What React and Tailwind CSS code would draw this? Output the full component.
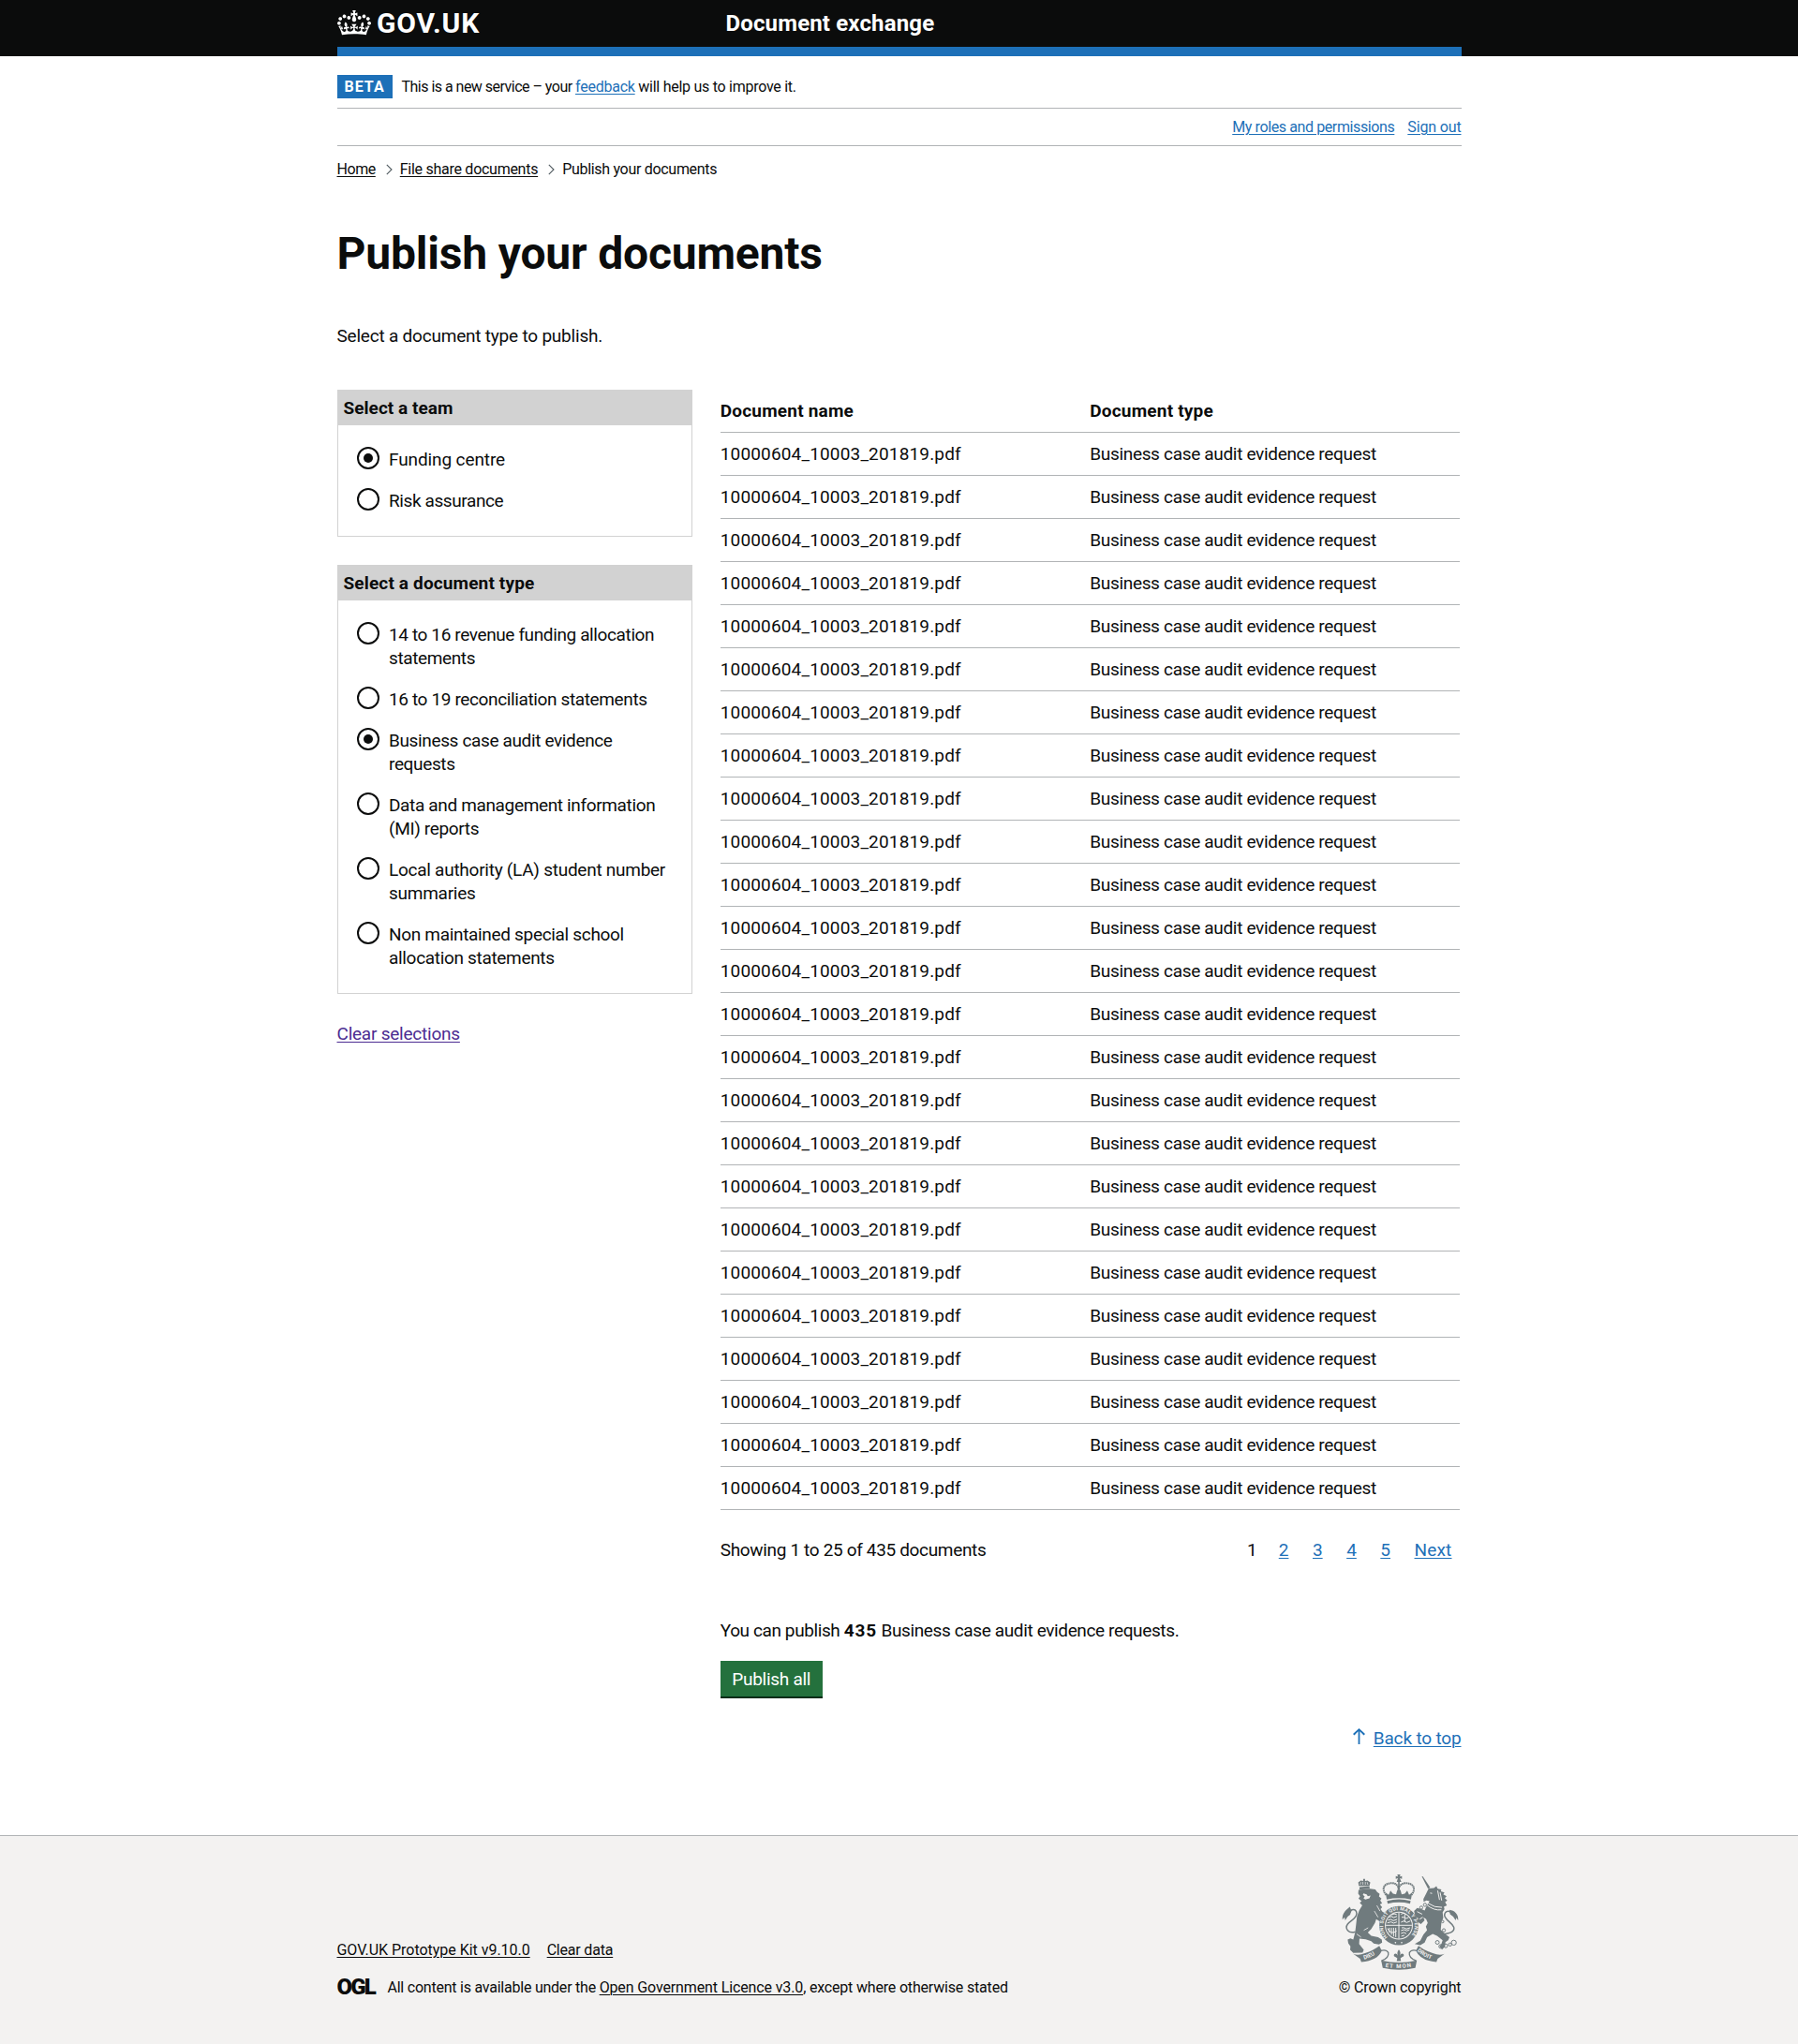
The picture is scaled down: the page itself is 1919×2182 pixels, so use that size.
const LINK = "text-[#1d70b8] underline underline-offset-2 decoration-1";
const DARK_LINK = "text-[#0b0c0c] underline underline-offset-2 decoration-1";

const teams = [
  { label: ["Funding centre"], tracking: "tracking-[-0.11px]", checked: true },
  { label: ["Risk assurance"], tracking: "tracking-[-0.4px]" },
];

const documentTypes = [
  { label: ["14 to 16 revenue funding allocation", "statements"], tracking: "tracking-[-0.38px]" },
  { label: ["16 to 19 reconciliation statements"], tracking: "tracking-[-0.37px]" },
  { label: ["Business case audit evidence", "requests"], tracking: "tracking-[-0.36px]", checked: true },
  { label: ["Data and management information", "(MI) reports"], tracking: "tracking-[-0.35px]" },
  { label: ["Local authority (LA) student number", "summaries"], tracking: "tracking-[-0.26px]" },
  { label: ["Non maintained special school", "allocation statements"], tracking: "tracking-[-0.32px]" },
];

const documents = Array.from({ length: 25 }, () => ({
  name: "10000604_10003_201819.pdf",
  type: "Business case audit evidence request",
}));

function Crown() {
  return (
    <svg viewBox="0 0 132 97" className="h-[26.5px] w-9" fill="currentColor" aria-hidden="true">
      <path d="M25 30.2c3.5 1.5 7.7-.2 9.1-3.7 1.5-3.6-.2-7.8-3.9-9.2-3.6-1.4-7.6.3-9.1 3.9-1.4 3.5.3 7.5 3.9 9zM9 39.5c3.6 1.5 7.8-.2 9.2-3.7 1.5-3.6-.2-7.8-3.9-9.1-3.6-1.5-7.6.2-9.1 3.8-1.4 3.5.3 7.5 3.8 9zM4.4 57.2c3.5 1.5 7.7-.2 9.1-3.8 1.5-3.6-.2-7.7-3.9-9.1-3.5-1.5-7.6.3-9.1 3.8-1.4 3.5.3 7.6 3.9 9.1zm38.3-21.4c3.5 1.5 7.7-.2 9.1-3.8 1.5-3.6-.2-7.7-3.9-9.1-3.6-1.5-7.6.3-9.1 3.8-1.3 3.6.4 7.7 3.9 9.1zm64.4-5.6c-3.6 1.5-7.8-.2-9.1-3.7-1.5-3.6.2-7.8 3.8-9.2 3.6-1.4 7.7.3 9.2 3.9 1.3 3.5-.4 7.5-3.9 9zm15.9 9.3c-3.6 1.5-7.7-.2-9.1-3.7-1.5-3.6.2-7.8 3.7-9.1 3.6-1.5 7.7.2 9.2 3.8 1.5 3.5-.3 7.5-3.8 9zm4.7 17.7c-3.6 1.5-7.8-.2-9.2-3.8-1.5-3.6.2-7.7 3.9-9.1 3.6-1.5 7.7.3 9.2 3.8 1.3 3.5-.4 7.6-3.9 9.1zM89.3 35.8c-3.6 1.5-7.8-.2-9.2-3.8-1.4-3.6.2-7.7 3.9-9.1 3.6-1.5 7.7.3 9.2 3.8 1.4 3.6-.3 7.7-3.9 9.1zM69.7 17.7l8.9 4.7V9.3l-8.9 2.8c-.2-.3-.5-.6-.9-.9L72.4 0H59.6l3.5 11.2c-.3.3-.6.5-.9.9l-8.8-2.8v13.1l8.8-4.7c.3.3.6.7.9.9l-5 15.4v.1c-.2.8-.4 1.6-.4 2.4 0 4.1 3.1 7.5 7 8.1h.2c.3 0 .7.1 1 .1.4 0 .7 0 1-.1h.2c4-.6 7.1-4.1 7.1-8.1 0-.8-.1-1.7-.4-2.4V34l-5.1-15.4c.4-.2.7-.6 1-.9zM66 92.8c16.9 0 32.8 1.1 47.1 3.2 4-16.9 8.9-26.7 14-33.5l-9.6-3.4c1 4.9 1.1 7.2 0 10.2-1.5-1.4-3-4.3-4.2-8.7L108.6 76c2.8-2 5-3.2 7.5-3.3-4.4 9.4-10 11.9-13.6 11.2-4.3-.8-6.3-4.6-5.6-7.9 1-4.7 5.7-5.9 8-.5 4.3-8.7-3-11.4-7.6-8.8 7.1-7.2 7.9-13.5 2.1-21.1-8 6.1-8.1 12.3-4.5 20.8-4.7-5.4-12.1-2.5-9.5 6.2 3.4-5.2 7.9-2 7.2 3.1-.6 4.3-6.4 7.8-13.5 7.2-10.3-.9-10.9-8-11.2-13.8 2.5-.5 7.1 1.8 11 7.3L80.2 60c-4.1 4.4-8 5.3-12.3 5.4 1.4-4.4 8-11.6 8-11.6H55.5s6.4 7.2 7.9 11.6c-4.2-.1-8-1-12.3-5.4l1.4 16.4c3.9-5.5 8.5-7.7 10.9-7.3-.3 5.8-.9 12.8-11.1 13.8-7.2.6-12.9-2.9-13.5-7.2-.7-5 3.8-8.3 7.1-3.1 2.7-8.7-4.6-11.6-9.4-6.2 3.7-8.5 3.6-14.7-4.6-20.8-5.8 7.6-5 13.9 2.2 21.1-4.7-2.6-11.9.1-7.7 8.8 2.3-5.5 7.1-4.2 8.1.5.7 3.3-1.3 7.1-5.7 7.9-3.5.7-9-1.8-13.5-11.2 2.5.1 4.7 1.3 7.5 3.3l-4.7-15.4c-1.2 4.4-2.7 7.2-4.3 8.7-1.1-3-.9-5.3 0-10.2l-9.5 3.4c5 6.9 9.9 16.7 14 33.5 14.8-2.1 30.8-3.2 47.7-3.2z" />
    </svg>
  );
}

function RoyalArms() {
  return (
    <svg viewBox="66 57 375 311" className="block h-[103px] w-[125px] text-[#707b7e]" aria-hidden="true">
      {/* lion */}
      <path
        fill="currentColor"
        d="M119 110L156 106L173 108L179 117L187 123L185 131L193 138L189 144L195 153L188 157L195 166L190 172L196 180L206 186L210 196L204 204L192 200L200 210L188 212L176 204L172 216L160 236L149 247L160 258L182 262L194 270L195 280L185 286L168 283L160 275L142 269L122 267L121 284L136 303L132 312L102 313L92 303L93 292L86 282L84 270L93 266L102 270L108 247L111 222L114 196L121 176L131 160L123 151L129 146L119 138L124 130L118 122Z"
      />
      <path fill="#f3f2f1" d="M135 121l10 3 4 6 9-2-4 9-13 4-6-4 4-6-6-5z" />
      <path fill="none" stroke="#f3f2f1" strokeWidth="2.5" d="M178 160l10 18M170 178l12 20M113 252l14 10M150 232l-14 8" />
      <path
        fill="none"
        stroke="currentColor"
        strokeWidth="4.5"
        d="M109 245C86 252 74 234 84 220C94 207 112 203 113 186C113 176 106 171 98 174C92 177 92 186 84 188"
      />
      <path fill="currentColor" d="M91 164C80 174 66 182 67 206L74 198L76 208L84 196L92 190L96 176Z" />
      {/* lion's crown */}
      <path fill="currentColor" d="M120 97L118 86L126 80L134 81L134 74H140L140 81L148 80L157 86L154 97Z" />
      <path fill="currentColor" d="M122 101L154 98L155 106L122 109Z" />
      <path fill="none" stroke="#f3f2f1" strokeWidth="2" d="M124 93l3-8M133 93v-9M141 93v-9M149 93l-2-8" />
      {/* imperial crown */}
      <path fill="none" stroke="currentColor" strokeWidth="6" strokeDasharray="5 1.5" d="M208 126C190 104 204 88 226 88C242 88 247 98 248 108C250 98 256 88 272 88C294 88 306 104 290 126" />
      <path fill="currentColor" d="M244 60h10l-2 7 7-2v9l-7-2 5 12h-15l4-12-7 2v-9l7 2z" />
      <path fill="none" stroke="currentColor" strokeWidth="5" d="M249 82V128" />
      <path fill="currentColor" d="M206 118L216 126L222 112L230 122L240 124L244 110L254 110L258 124L268 122L276 112L282 126L292 118L288 141Q249 132 210 141Z" />
      <path fill="currentColor" d="M211 145Q249 135 287 145L285 154Q249 145 213 154Z" />
      {/* garter and quartered shield */}
      <circle cx="249" cy="225" r="54" fill="none" stroke="currentColor" strokeWidth="18" />
      <defs>
        <path id="garter" d="M213 262A51 51 0 1 1 285 262" />
        <path id="scroll-left" d="M137 334Q168 326 190 302" />
        <path id="scroll-mid" d="M205 358Q249 366 294 357" />
        <path id="scroll-right" d="M308 307Q330 328 366 338" />
      </defs>
      <text fill="#f3f2f1" className="font-['Roboto'] text-[16px] font-bold">
        <textPath href="#garter" textLength="232">HONI SOIT QUI MAL Y PENSE</textPath>
      </text>
      <circle cx="238" cy="280" r="2.5" fill="#f3f2f1" />
      <circle cx="258" cy="280" r="2.5" fill="#f3f2f1" />
      <circle cx="249" cy="225" r="42" fill="currentColor" />
      <path fill="none" stroke="#f3f2f1" strokeWidth="3" d="M249 183V267M207 224H291" />
      <path
        fill="none"
        stroke="#f3f2f1"
        strokeWidth="3"
        d="M217 198l8-3 7 4 11-4M214 207l9-2 8 4 12-4M212 216l12-3 8 4 11-4M226 190l8-3 8 2M256 188l8-3 8 4M258 198h8l7 4 8-4M256 214l9-4 9 5 12-5M268 190v24M258 232h8l7 4 12-4M256 241l10-3 8 4 9-4M256 250l9-3 8 4M257 259l10-3M218 232v16M225 232v22M232 232v28M239 232v30M212 234q12 22 30 8"
      />
      {/* unicorn */}
      <path fill="currentColor" d="M323 67L326 66L350 102L343 106Z" />
      <path
        fill="currentColor"
        d="M345 105L362 104L370 98L374 106L386 108L384 114L396 118L392 124L403 130L397 136L405 144L398 149L404 160L394 164L396 172L390 182L392 200L386 216L384 238L396 250L412 262L408 272L399 278L398 292L388 302L380 292L386 284L390 272L372 258L358 252L340 262L332 280L318 288L300 284L318 274L328 254L340 240L336 228L342 216L337 204L328 198L332 208L320 220L306 210L312 202L302 196L298 178L308 168L322 172L332 176L340 158L348 146L338 144L329 148L328 139L338 120Z"
      />
      <path fill="none" stroke="#f3f2f1" strokeWidth="3" d="M342 152Q364 168 388 166M340 159Q362 177 386 174M308 180l16 8M316 204l10-6M350 120l6 1M374 112l6 30M382 118l5 26" />
      <path
        fill="none"
        stroke="currentColor"
        strokeWidth="4.5"
        d="M388 252C414 252 430 244 426 230C420 214 398 208 396 192C396 180 408 174 416 182C420 188 426 190 430 192"
      />
      <path fill="currentColor" d="M412 174C428 176 442 188 440 208L434 200L432 208L424 196L414 188Z" />
      <g fill="none" stroke="currentColor" strokeWidth="3">
        <circle cx="373" cy="279" r="6" />
        <circle cx="384" cy="292" r="6" />
        <circle cx="400" cy="290" r="6" />
        <circle cx="414" cy="286" r="5" />
        <circle cx="426" cy="280" r="8" />
        <circle cx="333" cy="158" r="5" />
        <circle cx="321" cy="167" r="5" />
        <circle cx="390" cy="212" r="4" fill="#f3f2f1" />
        <circle cx="394" cy="240" r="5" fill="#f3f2f1" />
      </g>
      {/* motto scroll */}
      <path fill="currentColor" d="M102 316Q118 322 140 314Q168 304 186 290L194 306Q180 338 128 342L124 332Z" />
      <path fill="currentColor" d="M396 316Q380 322 358 314Q330 304 312 290L304 306Q318 338 370 342L374 332Z" />
      <path fill="currentColor" d="M192 337Q249 351 307 337L302 361Q249 373 197 361Z" />
      <path fill="none" stroke="currentColor" strokeWidth="4" d="M190 306Q208 300 215 312Q218 330 193 338M308 306Q290 300 283 312Q280 330 305 338" />
      <g fill="#f3f2f1" className="font-['Roboto'] text-[18px] font-bold">
        <text><textPath href="#scroll-left">DIEU</textPath></text>
        <text><textPath href="#scroll-mid" textLength="84">ET MON</textPath></text>
        <text><textPath href="#scroll-right">DROIT</textPath></text>
      </g>
      {/* fleur */}
      <path fill="currentColor" d="M249 302q8 9 3 20q5-10 12-5q4 8-6 10l-4 3 2 9h-14l2-9-4-3q-10-2-6-10q7-5 12 5q-5-11 3-20z" />
    </svg>
  );
}

function Chevron() {
  return (
    <svg viewBox="0 0 7 12" className="mt-[7px] h-3 w-[7px]" fill="none" stroke="#505a5f" strokeWidth="1.1" aria-hidden="true">
      <path d="M0.8 0.8L6 6L0.8 11.2" />
    </svg>
  );
}

function Radio({ label, tracking, checked }) {
  return (
    <label className="flex gap-2.5">
      <span className="flex size-6 shrink-0 items-center justify-center rounded-full border-2 border-[#0b0c0c]">
        {checked && <span className="size-2.5 rounded-full bg-[#0b0c0c]" />}
      </span>
      <span className={`mt-px whitespace-nowrap ${tracking}`}>
        {label.map((line) => (
          <span key={line} className="block">{line}</span>
        ))}
      </span>
    </label>
  );
}

function FilterBox({ title, tracking, options }) {
  return (
    <section className="w-[379px] border border-[#d2d2d2]">
      <h2 className={`h-[37px] bg-[#d2d2d2] pt-1.5 pl-1.5 font-bold ${tracking}`}>{title}</h2>
      <div className="flex flex-col gap-[18px] pt-[23px] pb-[25px] pl-[20.5px]">
        {options.map((o) => (
          <Radio key={o.label[0]} {...o} />
        ))}
      </div>
    </section>
  );
}

export default function App() {
  return (
    <div className="min-h-[2182px] bg-white font-['Roboto',sans-serif] text-[19px] leading-[25px] text-[#0b0c0c]">
      <header className="h-[60px] bg-[#0b0c0c] text-white">
        <div className="mx-auto flex h-[60px] w-[1200px] border-b-10 border-[#1d70b8]">
          <div className="flex w-[415px]">
            <span className="mt-[11px] ml-[0.5px]"><Crown /></span>
            <span className="mt-2.5 ml-1.5 text-[30px] leading-[30px] font-bold tracking-[0.9px]">GOV.UK</span>
          </div>
          <span className="mt-2.5 text-2xl leading-[30px] font-bold tracking-[0.15px]">Document exchange</span>
        </div>
      </header>

      <div className="mx-auto w-[1200px]">
        <div className="flex h-14 border-b border-[#b1b4b6] pt-5 text-base leading-[25px]">
          <strong className="h-[25px] w-[59px] bg-[#1d70b8] pl-2 font-bold tracking-[1px] text-white">BETA</strong>
          <span className="ml-2.5 whitespace-pre">
            <span className="tracking-[-0.52px]">This is a new service – your </span>
            <a href="#" className={`tracking-[-0.24px] ${LINK}`}>feedback</a>
            <span className="tracking-[-0.27px]"> will help us to improve it.</span>
          </span>
        </div>
        <nav className="flex h-10 justify-end gap-3.5 border-b border-[#b1b4b6] pt-[7px] text-base leading-[25px]">
          <a href="#" className={`tracking-[-0.39px] ${LINK}`}>My roles and permissions</a>
          <a href="#" className={`tracking-[-0.15px] ${LINK}`}>Sign out</a>
        </nav>
        <nav className="mt-3 flex text-base leading-[25px]">
          <a href="#" className={`tracking-[-0.45px] ${DARK_LINK}`}>Home</a>
          <span className="ml-[11px]"><Chevron /></span>
          <a href="#" className={`ml-2 tracking-[-0.27px] ${DARK_LINK}`}>File share documents</a>
          <span className="ml-[11px]"><Chevron /></span>
          <span className="ml-2 tracking-[-0.3px]">Publish your documents</span>
        </nav>

        <h1 className="mt-[53px] text-5xl leading-[50px] font-bold tracking-[-0.18px]">Publish your documents</h1>
        <p className="mt-[50px] tracking-[-0.21px]">Select a document type to publish.</p>

        <main className="mt-[45px] flex gap-[29.25px]">
          <div className="w-[380px]">
            <div className="flex flex-col gap-[30px]">
              <FilterBox title="Select a team" tracking="tracking-[0.04px]" options={teams} />
              <FilterBox title="Select a document type" tracking="tracking-[0.15px]" options={documentTypes} />
            </div>
            <a href="#" className="mt-[30px] inline-block tracking-[-0.23px] text-[#4c2c92] underline decoration-1 underline-offset-2">
              Clear selections
            </a>
          </div>

          <div className="w-[790.75px]">
            <div className="w-[789px]">
              <div className="grid grid-cols-2 border-b border-[#b1b4b6] py-2.5 font-bold tracking-[0.2px]">
                <span>Document name</span>
                <span>Document type</span>
              </div>
              {documents.map((d, i) => (
                <div key={i} className="grid grid-cols-2 border-b border-[#b1b4b6] py-2.5">
                  <span className="tracking-[0.16px]">{d.name}</span>
                  <span className="tracking-[-0.32px]">{d.type}</span>
                </div>
              ))}
            </div>
            <div className="mt-[30px] flex justify-between">
              <span className="tracking-[-0.34px]">Showing 1 to 25 of 435 documents</span>
              <div className="flex gap-[25.5px] pr-2.5">
                <span className="-mr-[2.5px]">1</span>
                {["2", "3", "4", "5"].map((n) => (
                  <a key={n} href="#" className={LINK}>{n}</a>
                ))}
                <a href="#" className={`tracking-[0.18px] ${LINK}`}>Next</a>
              </div>
            </div>
            <p className="mt-[61px] whitespace-pre">
              <span className="tracking-[-0.4px]">You can publish </span>
              <b className="tracking-[0.9px]">435</b>
              <span className="tracking-[-0.37px]"> Business case audit evidence requests.</span>
            </p>
            <button className="mt-5 block h-[38px] w-[109px] bg-[#24713d] tracking-[-0.27px] text-white shadow-[0_2px_0_#002d18]">
              Publish all
            </button>
            <div className="mt-8 flex justify-end gap-[9px]">
              <svg viewBox="0 0 13 17" className="mt-0.5 h-[17px] w-[13px]" fill="#1d70b8" aria-hidden="true">
                <path d="M5.6 17V3.3L1.5 7.4L0 6L6.5 0L13 6L11.5 7.4L7.4 3.3V17z" />
              </svg>
              <a href="#" className={`tracking-[-0.17px] ${LINK}`}>Back to top</a>
            </div>
          </div>
        </main>
      </div>

      <footer className="mt-[91px] h-[223px] border-t border-[#b1b4b6] bg-[#f3f2f1] text-base leading-5">
        <div className="mx-auto flex w-[1200px] justify-between">
          <div className="pt-[112px]">
            <div className="flex gap-[18px]">
              <a href="#" className={`tracking-[-0.03px] ${DARK_LINK}`}>GOV.UK Prototype Kit v9.10.0</a>
              <a href="#" className={`tracking-[-0.2px] ${DARK_LINK}`}>Clear data</a>
            </div>
            <div className="mt-5 flex">
              <span className="-mt-px w-[54px] text-2xl leading-5 font-black tracking-[-1.8px]">OGL</span>
              <span className="whitespace-pre">
                <span className="tracking-[-0.23px]">All content is available under the </span>
                <a href="#" className={`tracking-[-0.13px] ${DARK_LINK}`}>Open Government Licence v3.0</a>
                <span className="tracking-[-0.18px]">, except where otherwise stated</span>
              </span>
            </div>
          </div>
          <div className="flex flex-col items-end pt-10">
            <span className="mr-[2.5px]"><RoyalArms /></span>
            <span className="mt-[9px] tracking-[-0.1px]">© Crown copyright</span>
          </div>
        </div>
      </footer>
    </div>
  );
}
